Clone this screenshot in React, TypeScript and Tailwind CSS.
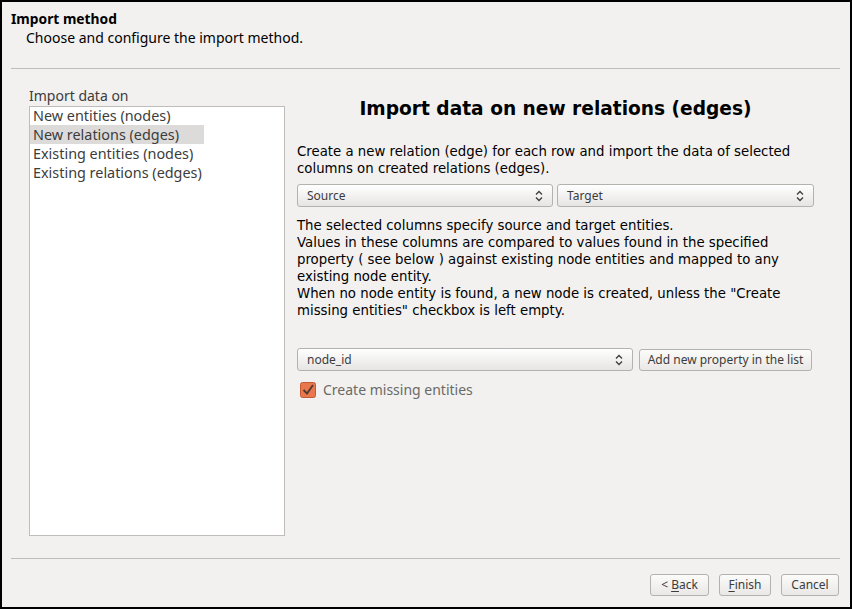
import React from 'react';

const ui = { fontFamily: '"Noto Sans", "Open Sans", sans-serif' };
const dv = { fontFamily: '"DejaVu Sans", "Liberation Sans", sans-serif' };

function Updown() {
  return (
    <svg width="8" height="12" viewBox="0 0 8 12" className="shrink-0">
      <path d="M1 4.5 L4 1.5 L7 4.5" fill="none" stroke="#3c3c3c" strokeWidth="1.3" />
      <path d="M1 7.5 L4 10.5 L7 7.5" fill="none" stroke="#3c3c3c" strokeWidth="1.3" />
    </svg>
  );
}

function Combo({ label, className }: { label: string; className: string }) {
  return (
    <div
      className={`flex h-[23px] items-center justify-between rounded-[3px] border border-[#b3b2ae] bg-gradient-to-b from-[#ffffff] to-[#e6e5e3] pl-[9px] pr-[9px] text-[12px] text-[#3c3c3c] ${className}`}
      style={ui}
    >
      <span>{label}</span>
      <Updown />
    </div>
  );
}

function Btn({ children, className }: { children: React.ReactNode; className: string }) {
  return (
    <div
      className={`flex h-[22px] items-center justify-center rounded-[3px] border border-[#b3b2ae] bg-gradient-to-b from-[#fbfbfa] to-[#e9e8e6] text-[12px] text-[#3c3c3c] ${className}`}
      style={ui}
    >
      {children}
    </div>
  );
}

export default function App() {
  const items = [
    'New entities (nodes)',
    'New relations (edges)',
    'Existing entities (nodes)',
    'Existing relations (edges)',
  ];

  return (
    <div className="flex h-[609px] w-[852px] flex-col border-2 border-black bg-[#f2f1f0]">
      {/* header */}
      <div className="px-[9px] pt-[8px]">
        <div className="text-[13.8px] font-bold leading-[18px] text-black" style={ui}>
          Import method
        </div>
        <div className="pl-[15px] text-[14px] leading-[20px] text-black" style={ui}>
          Choose and configure the import method.
        </div>
      </div>
      <div className="ml-[9px] mr-[10px] mt-[20px] h-px bg-[#bebdba]" />

      {/* body */}
      <div className="flex h-[489px] pl-[27px]">
        <div className="flex w-[256px] flex-col pt-[18px]">
          <div className="text-[14px] leading-[18px] text-[#3c3c3c]" style={ui}>
            Import data on
          </div>
          <div className="mt-px h-[430px] border border-[#bebdba] bg-white">
            <div className="-mt-[1px]">
              {items.map((it, i) => (
                <div
                  key={it}
                  className={`w-[174px] whitespace-nowrap px-[3px] text-[14.4px] leading-[19px] text-[#3c3c3c] ${
                    i === 1 ? 'bg-[#dcdbd9]' : ''
                  }`}
                  style={ui}
                >
                  {it}
                </div>
              ))}
            </div>
          </div>
        </div>

        <div className="ml-[12px] flex w-[517px] flex-col pt-[28px]">
          <div className="text-center text-[18.6px] font-bold leading-[24px] text-black" style={dv}>
            Import data on new relations (edges)
          </div>
          <div className="mt-[22px] whitespace-nowrap text-[13.3px] leading-[17px] text-black" style={dv}>
            Create a new relation (edge) for each row and import the data of selected
            <br />
            columns on created relations (edges).
          </div>
          <div className="mt-[7px] flex gap-[4px]">
            <Combo label="Source" className="w-[256px]" />
            <Combo label="Target" className="w-[257px]" />
          </div>
          <div className="mt-[10px] whitespace-nowrap text-[13.3px] leading-[17px] text-black" style={dv}>
            The selected columns specify source and target entities.
            <br />
            Values in these columns are compared to values found in the specified
            <br />
            property ( see below ) against existing node entities and mapped to any
            <br />
            existing node entity.
            <br />
            When no node entity is found, a new node is created, unless the "Create
            <br />
            missing entities" checkbox is left empty.
          </div>
          <div className="mt-[29px] flex items-center gap-[6px]">
            <Combo label="node_id" className="w-[336px]" />
            <Btn className="w-[173px]">Add new property in the list</Btn>
          </div>
          <div className="mt-[10px] flex items-center gap-[7px] pl-[3px]">
            <svg width="16" height="16" viewBox="0 0 16 16">
              <rect x="0.5" y="0.5" width="15" height="15" rx="2" fill="#e9774b" stroke="#c45a33" />
              <path d="M3.5 8 L7 11.5 L13 3" fill="none" stroke="#4a3a33" strokeWidth="1.8" />
            </svg>
            <span className="text-[14px] leading-[18px] text-[#6a6a67]" style={ui}>
              Create missing entities
            </span>
          </div>
        </div>
      </div>

      {/* footer */}
      <div className="ml-[9px] mr-[10px] h-px bg-[#bebdba]" />
      <div className="flex justify-end gap-[10px] pr-[11px] pt-[15px]">
        <Btn className="w-[59px]">
          &lt;&nbsp;<span className="underline underline-offset-2">B</span>ack
        </Btn>
        <Btn className="w-[52px]">
          <span className="underline underline-offset-2">F</span>inish
        </Btn>
        <Btn className="w-[58px]">Cancel</Btn>
      </div>
    </div>
  );
}
